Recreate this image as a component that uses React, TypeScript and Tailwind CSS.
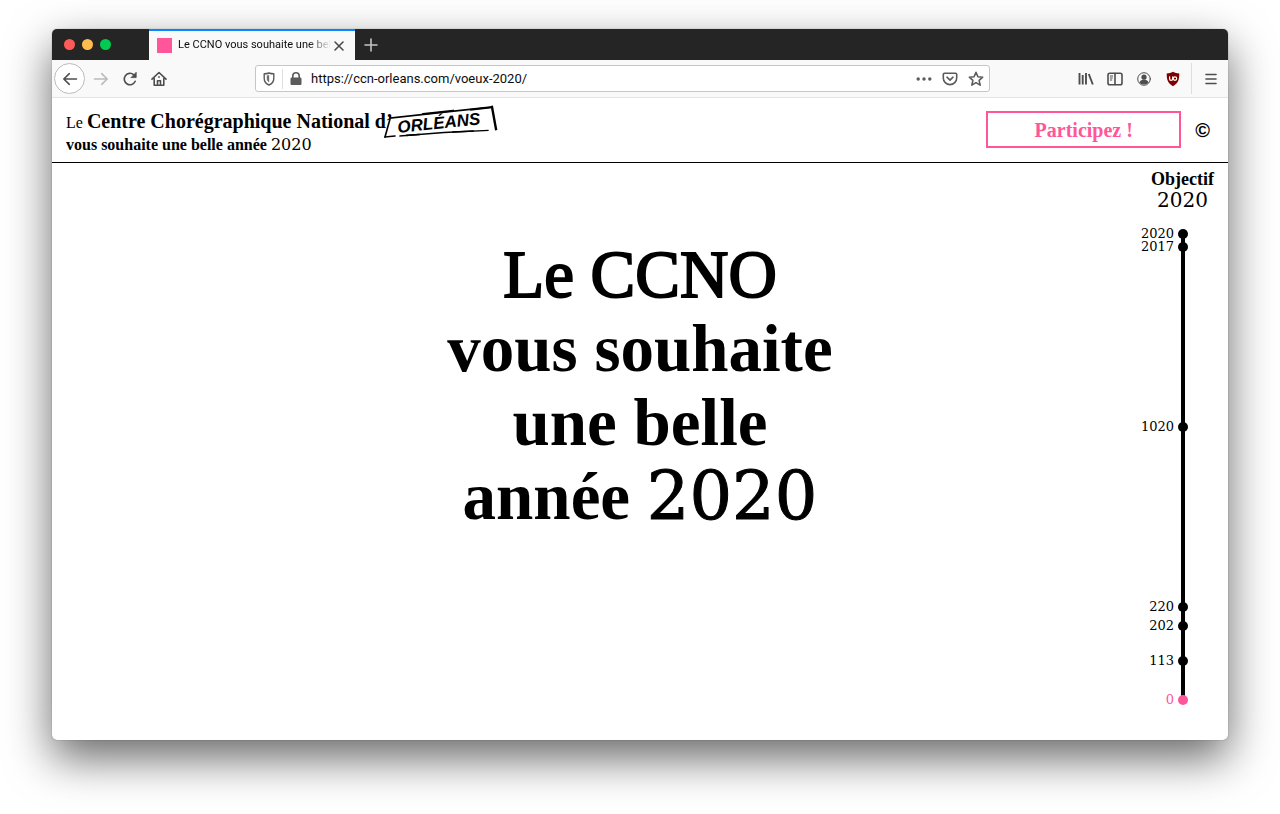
import type { ReactNode } from "react";

const years = [
  { label: "2020", gap: 13 },
  { label: "2017", gap: 180 },
  { label: "1020", gap: 180 },
  { label: "220", gap: 19 },
  { label: "202", gap: 35 },
  { label: "113", gap: 39 },
  { label: "0", gap: 0, current: true },
];

function Digits({ children }: { children: ReactNode }) {
  return <span className="font-['DejaVu_Serif',serif] font-normal leading-none">{children}</span>;
}

function Icon({ children, className = "" }: { children: ReactNode; className?: string }) {
  return (
    <svg
      viewBox="0 0 16 16"
      className={`size-4 shrink-0 ${className}`}
      fill="none"
      stroke="currentColor"
      strokeWidth="1.6"
      strokeLinecap="round"
      strokeLinejoin="round"
      aria-hidden="true"
    >
      {children}
    </svg>
  );
}

function IconButton({ label, children, className = "" }: { label: string; children: ReactNode; className?: string }) {
  return (
    <button type="button" aria-label={label} className={`flex shrink-0 items-center justify-center ${className}`}>
      {children}
    </button>
  );
}

function TabBar() {
  return (
    <div className="flex h-[31px] items-stretch bg-[#252525]">
      <div className="flex w-[97px] items-center gap-[7px] pl-3">
        <button type="button" aria-label="Fermer" className="size-[11px] rounded-full bg-[#fc5b57]" />
        <button type="button" aria-label="Réduire" className="size-[11px] rounded-full bg-[#fdbc4f]" />
        <button type="button" aria-label="Agrandir" className="size-[11px] rounded-full bg-[#05c950]" />
      </div>
      <div className="flex w-[206px] items-center border-t-2 border-[#0a84ff] bg-[#f9f9fa] pl-2 pr-2">
        <span className="size-[15px] shrink-0 bg-[#ff5599]" />
        <span className="ml-[6px] flex-1 overflow-hidden whitespace-nowrap mask-r-from-85% font-[Roboto,sans-serif] text-[11px] text-[#0c0c0d]">
          Le CCNO vous souhaite une bel
        </span>
        <IconButton label="Fermer l’onglet" className="text-[#4a4a4f]">
          <Icon>
            <path d="M4 4l8 8M12 4l-8 8" />
          </Icon>
        </IconButton>
      </div>
      <IconButton label="Nouvel onglet" className="w-8 text-[#c4c4c4]">
        <Icon>
          <path d="M8 2v12M2 8h12" />
        </Icon>
      </IconButton>
    </div>
  );
}

function Toolbar() {
  return (
    <div className="flex h-[38px] items-center border-b border-[#e4e4e5] bg-[#f9f9fa] pl-[2px] pr-[9px] text-[#4e4e50]">
      <IconButton label="Page précédente" className="size-[31px] rounded-full border border-[#bcbcbd] bg-white">
        <Icon>
          <path d="M14.500 8H1.800M7.300 2.700L1.800 8l5.500 5.300" />
        </Icon>
      </IconButton>
      <IconButton label="Page suivante" className="ml-2 text-[#bababb]">
        <Icon>
          <path d="M1.500 8h12.700M8.700 2.700l5.500 5.300-5.500 5.300" />
        </Icon>
      </IconButton>
      <IconButton label="Actualiser" className="ml-[13px]">
        <Icon>
          <path d="M13.200 10.300A5.700 5.700 0 1 1 11.800 3.800l1.400 1.400" />
          <path d="M14.200 1.600v5H9.300z" fill="currentColor" strokeWidth="0.800" />
        </Icon>
      </IconButton>
      <IconButton label="Accueil" className="ml-[13px]">
        <Icon>
          <path d="M1 8.200L8 1.500l7 6.700M3.200 7.500v6.700h9.600V7.500" />
          <path d="M6.500 14v-4.300h3V14" />
          <path d="M8 5.800v.5" />
        </Icon>
      </IconButton>

      <div className="mx-[88px] flex h-[27px] min-w-0 flex-1 items-center rounded-[3px] border border-[#c6c6c7] bg-white px-[5px] text-[#5b5b5d]">
        <Icon>
          <path d="M8 2c1.600.6 3.200.8 4.800.8v4.400c0 3.200-1.800 5.600-4.800 6.800-3-1.200-4.800-3.600-4.800-6.800V2.800C4.800 2.800 6.400 2.600 8 2z" strokeWidth="1.400" />
          <path d="M6.200 4.800v3c0 1.300.6 2.400 1.600 3.200V4.500z" fill="currentColor" strokeWidth="0.500" />
        </Icon>
        <span className="ml-[5px] h-5 w-px bg-[#dededf]" />
        <Icon className="ml-[5px]">
          <rect x="2.500" y="6.500" width="11" height="7.500" rx="1.200" fill="currentColor" stroke="none" />
          <path d="M4.800 7V5a3.200 3.200 0 0 1 6.400 0v2" />
        </Icon>
        <input
          aria-label="Adresse"
          defaultValue="https://ccn-orleans.com/voeux-2020/"
          className="ml-[7px] min-w-0 flex-1 bg-transparent font-[Roboto,sans-serif] text-[13px] text-[#0c0c0d] outline-none"
        />
        <div className="flex gap-[10px]">
          <IconButton label="Actions de la page">
            <Icon>
              <g fill="currentColor" stroke="none">
                <circle cx="2.200" cy="8" r="1.700" />
                <circle cx="8" cy="8" r="1.700" />
                <circle cx="13.800" cy="8" r="1.700" />
              </g>
            </Icon>
          </IconButton>
          <IconButton label="Enregistrer dans Pocket">
            <Icon>
              <path d="M2.500 2.300h11c.7 0 1.200.5 1.200 1.200v3.400a6.700 6.700 0 0 1-13.400 0V3.500c0-.7.5-1.200 1.200-1.200z" />
              <path d="M5 6.200l3 2.900 3-2.900" />
            </Icon>
          </IconButton>
          <IconButton label="Marquer cette page">
            <Icon>
              <path d="M8 1.300l1.900 4.400 4.800.5-3.600 3.200 1.100 4.700L8 11.600l-4.200 2.500 1.100-4.700L1.300 6.200l4.800-.5z" />
            </Icon>
          </IconButton>
        </div>
      </div>

      <div className="flex gap-[13px]">
        <IconButton label="Bibliothèque">
          <Icon>
            <path d="M1.500 2v11.500M4.700 4v9.500M8 2v11.500M10.800 3l4 10.500" strokeWidth="1.900" strokeLinecap="butt" />
          </Icon>
        </IconButton>
        <IconButton label="Panneaux latéraux">
          <Icon>
            <rect x="1" y="2.200" width="14" height="11.600" rx="1.800" />
            <path d="M8 2.500v11" />
            <path d="M3.300 5h2.400M3.300 7h2M3.300 9h1.500" strokeWidth="1" />
          </Icon>
        </IconButton>
        <IconButton label="Compte">
          <Icon>
            <circle cx="8" cy="8" r="6.300" strokeWidth="1" />
            <circle cx="8" cy="6.200" r="2.600" fill="currentColor" stroke="none" />
            <path d="M3.300 11.300c1-1.700 2.500-2.500 4.700-2.500s3.700.8 4.700 2.500c-1.200 1.500-2.700 2.200-4.700 2.200s-3.500-.7-4.700-2.200z" fill="currentColor" stroke="none" />
          </Icon>
        </IconButton>
        <IconButton label="uBlock Origin">
          <Icon>
            <path d="M8 .8c2 1.200 4 1.700 6.300 1.700 0 6.500-1 9.600-6.300 12.700C2.700 12.100 1.700 9 1.700 2.500 4 2.500 6 2 8 .8z" fill="#800000" stroke="none" />
            <path d="M4.600 5.800v2c0 1 .6 1.600 1.500 1.600s1.600-.6 1.600-1.600v-2" stroke="#fff" strokeWidth="1.200" />
            <circle cx="10" cy="7.600" r="1.700" stroke="#fff" strokeWidth="1.200" />
          </Icon>
        </IconButton>
      </div>
      <span className="ml-[10px] h-[31px] w-px bg-[#dededf]" />
      <IconButton label="Menu" className="ml-[11px]">
        <Icon>
          <path d="M3 3.500h10M3 8h10M3 12.500h10" />
        </Icon>
      </IconButton>
    </div>
  );
}

function Stamp() {
  return (
    <svg viewBox="0 0 116 36" className="-mt-[6px] -mb-3 -ml-[10px] h-9 w-[116px] shrink-0" fill="none" stroke="black" strokeLinecap="square">
      <path d="M7 13L109 2" strokeWidth="1.600" />
      <path d="M40 9l30-3.400M88 4.700l20-2.200" strokeWidth="1.800" />
      <path d="M109 2l4 22" strokeWidth="2.400" />
      <path d="M7 14L2 32" strokeWidth="1.600" />
      <path d="M2 32l10-1M17 31l44-3.500 44-2" strokeWidth="1.300" />
      <path d="M24 30.300l12-.8M70 27l20-1" strokeWidth="1.600" />
      <text
        x="15"
        y="28"
        transform="rotate(-6 15 28)"
        fill="black"
        stroke="none"
        className="font-['Liberation_Sans',sans-serif] text-[17px] font-bold italic"
      >
        ORLÉANS
      </text>
    </svg>
  );
}

function SiteHeader() {
  return (
    <header className="flex h-[65px] items-start justify-between border-b border-black pt-[13px] pl-[14px] pr-[18px]">
      <div className="font-bold">
        <div className="flex items-start">
          <h2 className="whitespace-nowrap text-[20px] leading-5">
            <span className="text-[16px] font-normal">Le </span>Centre Chorégraphique National d’
          </h2>
          <Stamp />
        </div>
        <p className="text-[16px] leading-6">
          vous souhaite une belle année <Digits>2020</Digits>
        </p>
      </div>
      <div className="flex items-center gap-[14px]">
        <button
          type="button"
          className="h-[37px] w-[195px] border-2 border-[#ff5599] text-[20px] leading-6 font-bold text-[#ff5599]"
        >
          Participez !
        </button>
        <button
          type="button"
          aria-label="Crédits"
          className="font-['Liberation_Sans',sans-serif] text-[20px] leading-6 font-bold"
        >
          ©
        </button>
      </div>
    </header>
  );
}

function Timeline() {
  return (
    <aside className="flex flex-col items-end pt-[6px] pr-[14px]">
      <h2 className="text-center text-[18px] leading-[21px] font-bold">
        Objectif
        <br />
        <span className="text-[20px]">
          <Digits>2020</Digits>
        </span>
      </h2>
      <ol className="mr-[26px] mt-[22px] flex h-[466px] flex-col">
        {years.map((year) => (
          // each row takes the distance down to the next date
          <li
            key={year.label}
            className={`flex min-h-0 basis-0 items-stretch justify-end ${year.current ? "text-[#ff5599]" : "text-black"}`}
            style={{ flexGrow: year.gap }}
          >
            <span className="-mt-2 h-4 pr-1 text-[13px] leading-4">
              <Digits>{year.label}</Digits>
            </span>
            <span className="flex w-[10px] justify-center">
              <span className="z-10 -mt-[5px] -mr-[7px] size-[10px] shrink-0 rounded-full bg-current" />
              <span className="mr-[3px] w-1 shrink-0 bg-black" />
            </span>
          </li>
        ))}
      </ol>
    </aside>
  );
}

export default function App() {
  return (
    <div className="min-h-screen bg-white px-[52px] pt-[29px] pb-[74px]">
      <div className="overflow-hidden rounded-[5px] bg-white font-['Liberation_Serif',serif] text-black shadow-[0_0_1px_rgba(0,0,0,0.6),0_18px_45px_rgba(0,0,0,0.6)]">
        <TabBar />
        <Toolbar />
        <SiteHeader />
        <main className="grid min-h-[577px] grid-cols-[1fr_auto_1fr]">
          <h1 className="col-start-2 pt-[74px] text-center text-[67px] leading-[74px] font-bold">
            <span className="font-normal [-webkit-text-stroke:2px]">Le CCNO</span>
            <br />
            vous souhaite
            <br />
            une belle
            <br />
            année{" "}
            <span className="[-webkit-text-stroke:1px]">
              <Digits>2020</Digits>
            </span>
          </h1>
          <Timeline />
        </main>
      </div>
    </div>
  );
}
